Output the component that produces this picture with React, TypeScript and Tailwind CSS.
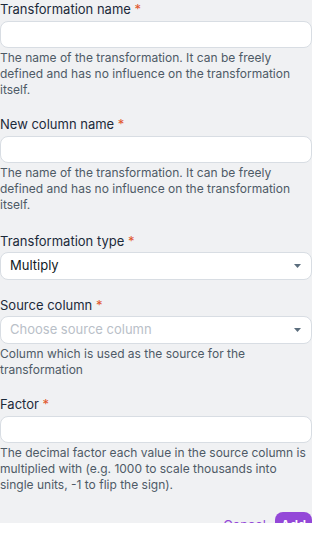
import React from "react";

const Label = ({ children }: { children: React.ReactNode }) => (
  <label className="block text-[13px] leading-[18px] text-[#1c2a3a]">
    {children} <span className="text-[#e0552b]">*</span>
  </label>
);

const Help = ({ children }: { children: React.ReactNode }) => (
  <p className="mt-[2px] text-[12px] leading-[16px] text-[#4e5a66]">{children}</p>
);

const TextInput = () => (
  <div className="mt-[3px] h-[27px] w-full rounded-[8px] border border-[#d8dde3] bg-white" />
);

const Select = ({ value, placeholder }: { value?: string; placeholder?: string }) => (
  <div className="mt-[2px] flex h-[28px] w-full items-center justify-between rounded-[8px] border border-[#d8dde3] bg-white pl-[9px] pr-[10px]">
    {value ? (
      <span className="text-[13px] text-[#111a24]">{value}</span>
    ) : (
      <span className="text-[13px] text-[#b9c0c8]">{placeholder}</span>
    )}
    <svg width="7" height="4" viewBox="0 0 7 4">
      <path d="M0 0h7L3.5 4z" fill="#5b6d7d" />
    </svg>
  </div>
);

export default function App() {
  return (
    <div className="w-[312px] h-[541px] bg-white font-['Inter',sans-serif]">
      <div className="h-[523px] overflow-hidden bg-[#f0f1f3]">
        <div className="flex flex-col">
          <div className="mb-[17px]">
            <Label>Transformation name</Label>
            <TextInput />
            <Help>
              The name of the transformation. It can be freely defined and has no influence on the
              transformation itself.
            </Help>
          </div>
          <div className="mb-[19px]">
            <Label>New column name</Label>
            <TextInput />
            <Help>
              The name of the transformation. It can be freely defined and has no influence on the
              transformation itself.
            </Help>
          </div>
          <div className="mb-[16px]">
            <Label>Transformation type</Label>
            <Select value="Multiply" />
          </div>
          <div className="mb-[17px]">
            <Label>Source column</Label>
            <Select placeholder="Choose source column" />
            <Help>Column which is used as the source for the transformation</Help>
          </div>
          <div>
            <Label>Factor</Label>
            <TextInput />
            <Help>
              The decimal factor each value in the source column is multiplied with (e.g. 1000 to
              scale thousands into single units, -1 to flip the sign).
            </Help>
          </div>
          <div className="mt-[19px] flex items-center justify-end gap-[5px]">
            <button className="h-[28px] px-[4px] text-[13px] text-[#9448d8]">Cancel</button>
            <button className="h-[28px] w-[37px] rounded-[8px] bg-[#9448d8] text-[13px] font-semibold text-white">
              Add
            </button>
          </div>
        </div>
      </div>
    </div>
  );
}
